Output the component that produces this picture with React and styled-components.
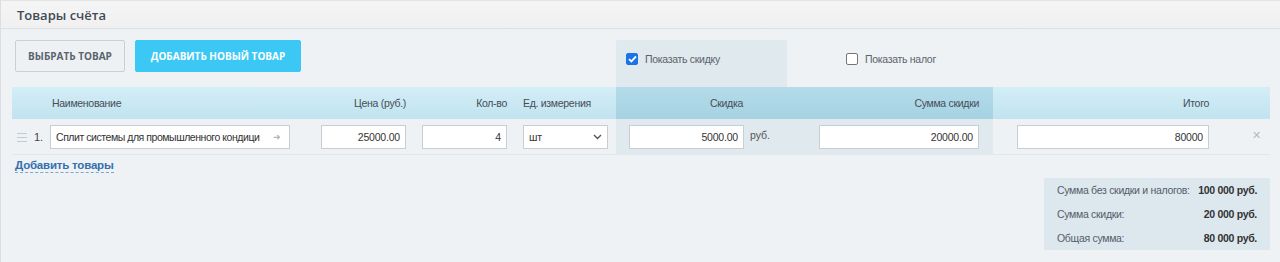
import React from "react";
import styled, { createGlobalStyle, css } from "styled-components";

const Global = createGlobalStyle`
  html, body { margin: 0; padding: 0; background: #eef2f4; }
  body { font-family: "Liberation Sans", Arial, sans-serif; color: #535c69; }
  * { box-sizing: border-box; }
`;

const COLS = "38px 256px 108px 101px 101px 171px 206px 277px";

const Panel = styled.div`
  border-left: 1px solid #dcdfe1;
  border-top: 1px solid #e2e4e5;
  min-height: 262px;
  background: #eef2f4;
`;

const TitleBar = styled.div`
  height: 28px;
  display: flex;
  align-items: center;
  padding-left: 16px;
  background: linear-gradient(#f5f5f5, #f0f0f0);
  border-bottom: 1px solid #dde1e3;
  font-family: "Open Sans", "Liberation Sans", sans-serif;
  font-weight: 600;
  font-size: 13px;
  color: #404a55;
`;

const Body = styled.div`
  padding: 11px 10px 0 11px;
`;

const Grid = styled.div`
  display: grid;
  grid-template-columns: ${COLS};
`;

const Toolbar = styled(Grid)`
  height: 47px;
`;

const Buttons = styled.div`
  grid-column: 1 / 6;
  display: flex;
  gap: 10px;
  padding-left: 3px;
  align-items: flex-start;
`;

const Button = styled.button`
  height: 32px;
  width: ${(p) => p.$w};
  padding: 0;
  font-family: "Open Sans", "Liberation Sans", sans-serif;
  font-weight: 700;
  font-size: 10px;
  text-transform: uppercase;
  border-radius: 2px;
  cursor: pointer;
  ${(p) =>
    p.$primary
      ? css`
          background: #3bc8f5;
          border: 1px solid #3bc8f5;
          color: #fff;
        `
      : css`
          background: #eef1f3;
          border: 1px solid #c9d0d5;
          color: #5a636e;
        `}
`;

const CheckPanel = styled.label`
  display: flex;
  align-items: flex-start;
  gap: 7px;
  padding: 13px 0 0 ${(p) => p.$pad || "10px"};
  font-size: 10.5px;
  letter-spacing: -0.3px;
  color: #5b636c;
  background: ${(p) => (p.$active ? "#dfe9ee" : "transparent")};
  border-radius: 2px 2px 0 0;
`;

const Box = styled.span`
  width: 12px;
  height: 12px;
  border-radius: 2px;
  flex: none;
  display: flex;
  align-items: center;
  justify-content: center;
  ${(p) =>
    p.$checked
      ? css`
          background: #1a73e8;
          border: 1px solid #1a73e8;
        `
      : css`
          background: #fff;
          border: 1px solid #767676;
        `}
`;

const Header = styled(Grid)`
  height: 32px;
  background: linear-gradient(#d3eef7, #c1e3ef);
  font-size: 10.5px;
  letter-spacing: -0.3px;
  color: #454e58;
`;

const HCell = styled.div`
  display: flex;
  align-items: center;
  justify-content: ${(p) => (p.$left ? "flex-start" : "flex-end")};
  padding-left: ${(p) => p.$pl || "0"};
  padding-right: ${(p) => p.$pr || "0"};
  ${(p) =>
    p.$disc &&
    css`
      background: linear-gradient(#b4dcea, #a6d2e2);
    `}
`;

const Row = styled(Grid)`
  height: 36px;
  border-bottom: 1px solid #e2e7ea;
`;

const Cell = styled.div`
  display: flex;
  align-items: flex-start;
  padding-top: 6px;
  padding-left: ${(p) => p.$pl || "0"};
  padding-right: ${(p) => p.$pr || "0"};
  background: ${(p) => (p.$disc ? "#dfe9ee" : "transparent")};
  gap: 6px;
`;

const Lead = styled.div`
  display: flex;
  align-items: center;
  height: 36px;
  padding-left: 5px;
  gap: 7px;
  font-size: 11px;
  color: #444;
`;

const Handle = styled.span`
  width: 10px;
  height: 9px;
  border-top: 1px solid #c4cbd0;
  border-bottom: 1px solid #c4cbd0;
  position: relative;
  &::after {
    content: "";
    position: absolute;
    left: 0;
    right: 0;
    top: 3px;
    border-top: 1px solid #c4cbd0;
  }
`;

const Input = styled.div`
  height: 24px;
  flex: 1;
  min-width: 0;
  background: #fff;
  border: 1px solid #c8cfd4;
  display: flex;
  align-items: center;
  justify-content: ${(p) => (p.$left ? "space-between" : "flex-end")};
  gap: 6px;
  padding: 0 5px 0 5px;
  font-size: 10.5px;
  letter-spacing: -0.2px;
  color: #333;
  white-space: nowrap;
  overflow: hidden;
`;

const Field = styled(Input)`
  flex: none;
  width: ${(p) => p.$w};
`;

const Clip = styled.span`
  flex: 1;
  min-width: 0;
  overflow: hidden;
  letter-spacing: -0.45px;
`;

const Arrow = styled.span`
  flex: none;
  color: #a8b0b6;
  font-size: 9px;
  margin-right: 3px;
`;

const Unit = styled.span`
  font-size: 10.5px;
  color: #555;
  line-height: 20px;
`;

const Remove = styled.span`
  margin-left: auto;
  margin-right: 9px;
  margin-top: 4px;
  color: #b5bbbf;
  font-size: 11px;
`;

const AddLink = styled.a`
  display: inline-block;
  margin: 3px 0 0 3px;
  font-size: 11.5px;
  letter-spacing: -0.2px;
  font-weight: 700;
  color: #3470ae;
  text-decoration: none;
  border-bottom: 1px dashed #7fa5cf;
  line-height: 14px;
`;

const SummaryWrap = styled.div`
  display: flex;
  justify-content: flex-end;
  margin-top: 5px;
`;

const Summary = styled.div`
  width: 226px;
  background: #dde8ee;
  padding: 0 13px 0 13px;
  display: grid;
  grid-template-columns: 1fr auto;
  column-gap: 8px;
  grid-auto-rows: 24px;
  align-items: center;
  font-size: 10.5px;
  letter-spacing: -0.3px;
  white-space: nowrap;
`;

const SLabel = styled.span`
  color: #535c69;
`;

const SValue = styled.span`
  font-weight: 700;
  color: #333;
  text-align: right;
`;

const Check = () => (
  <svg width="9" height="8" viewBox="0 0 9 8">
    <path d="M1 4.2 L3.4 6.4 L8 1.3" stroke="#fff" strokeWidth="1.8" fill="none" />
  </svg>
);

const Chevron = () => (
  <svg width="9" height="6" viewBox="0 0 9 6">
    <path d="M1 1 L4.5 4.5 L8 1" stroke="#555" strokeWidth="1.4" fill="none" />
  </svg>
);

export default function App() {
  return (
    <>
      <Global />
      <Panel>
        <TitleBar>Товары счёта</TitleBar>
        <Body>
          <Toolbar>
            <Buttons>
              <Button $w="110px">Выбрать товар</Button>
              <Button $primary $w="166px">
                Добавить новый товар
              </Button>
            </Buttons>
            <CheckPanel $active>
              <Box $checked>
                <Check />
              </Box>
              Показать скидку
            </CheckPanel>
            <CheckPanel $pad="59px">
              <Box />
              Показать налог
            </CheckPanel>
          </Toolbar>
          <Header>
            <HCell />
            <HCell $left $pl="2px">Наименование</HCell>
            <HCell $pr="8px">Цена (руб.)</HCell>
            <HCell $pr="8px">Кол-во</HCell>
            <HCell $left $pl="8px">Ед. измерения</HCell>
            <HCell $disc $pr="44px">Скидка</HCell>
            <HCell $disc $pr="14px">Сумма скидки</HCell>
            <HCell $pr="61px">Итого</HCell>
          </Header>
          <Row>
            <Lead>
              <Handle />
              1.
            </Lead>
            <Cell $pr="16px">
              <Input $left>
                <Clip>Сплит системы для промышленного кондици</Clip>
                <Arrow>➔</Arrow>
              </Input>
            </Cell>
            <Cell $pl="15px" $pr="8px">
              <Input>25000.00</Input>
            </Cell>
            <Cell $pl="8px" $pr="8px">
              <Input>4</Input>
            </Cell>
            <Cell $pl="8px" $pr="8px">
              <Input $left>
                <span>шт</span>
                <Chevron />
              </Input>
            </Cell>
            <Cell $disc $pl="13px">
              <Field $w="115px">5000.00</Field>
              <Unit>руб.</Unit>
            </Cell>
            <Cell $disc $pl="32px" $pr="14px">
              <Input>20000.00</Input>
            </Cell>
            <Cell $pl="24px">
              <Field $w="192px">80000</Field>
              <Remove>✕</Remove>
            </Cell>
          </Row>
          <AddLink href="#">Добавить товары</AddLink>
          <SummaryWrap>
            <Summary>
              <SLabel>Сумма без скидки и налогов:</SLabel>
              <SValue>100 000 руб.</SValue>
              <SLabel>Сумма скидки:</SLabel>
              <SValue>20 000 руб.</SValue>
              <SLabel>Общая сумма:</SLabel>
              <SValue>80 000 руб.</SValue>
            </Summary>
          </SummaryWrap>
        </Body>
      </Panel>
    </>
  );
}
